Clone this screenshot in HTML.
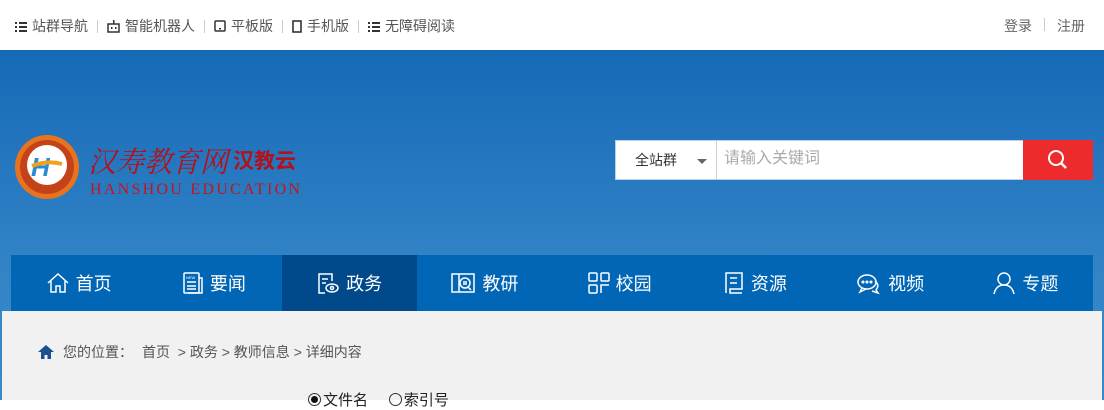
<!DOCTYPE html>
<html><head><meta charset="utf-8"><style>
*{margin:0;padding:0;box-sizing:border-box}
body{width:1104px;height:400px;overflow:hidden;font-family:"Liberation Sans","Noto Sans CJK SC",sans-serif;background:#fff;position:relative}
.top{height:50px;background:#fff;position:relative;font-size:14px;color:#555}
.top .l{position:absolute;left:15px;top:16px;display:flex;align-items:center;white-space:nowrap}
.top .sep{display:inline-block;width:1px;height:13px;background:#ccc;margin:0 9px}
.top .r{position:absolute;right:19px;top:16px;font-size:14px;color:#666}
.ic{display:inline-block;margin-right:5px;vertical-align:middle}
.banner{position:absolute;top:50px;left:0;width:1104px;height:350px;background:linear-gradient(#1569b6,#3283c6 60%,#3a89c9)}
.logo{position:absolute;left:14px;top:134px}
.search{position:absolute;left:615px;top:140px;width:478px;height:40px;background:#fff;border:1px solid #b9d0e6}
.search .sel{position:absolute;left:0;top:0;width:101px;height:38px;border-right:1px solid #c8d6e4;font-size:14px;color:#333;line-height:38px;padding-left:19px}
.search .sel:after{content:"";position:absolute;left:81px;top:18px;border:5px solid transparent;border-top:5px solid #666}
.search .ph{position:absolute;left:108px;top:3px;font-size:16px;color:#aaa}
.search .btn{position:absolute;right:-1px;top:-1px;width:70px;height:40px;background:#ee2b2c}
.nav{position:absolute;left:11px;top:255px;width:1082px;height:56px;background:#0066b5;display:flex}
.nav div{width:135.25px;display:flex;align-items:center;justify-content:center;color:#fff;font-size:18px}
.nav div.a{background:#004a8b}
.nav svg{margin-right:6px}
.content{position:absolute;left:2px;top:311px;width:1100px;height:89px;background:#f1f1f1}
.crumb{position:absolute;left:36px;top:31px;font-size:14px;color:#555;display:flex;align-items:center}
.radio{position:absolute;left:306px;top:78px;font-size:15px;color:#222}
.radio i{display:inline-block;width:13px;height:13px;border:1px solid #333;border-radius:50%;vertical-align:-1px;margin-right:2px;position:relative}
</style></head><body>
<div class="top">
<div class="l">
<svg class="ic" width="12" height="11"><g fill="#333"><rect x="0" y="1" width="2" height="2"/><rect x="4" y="1" width="8" height="2"/><rect x="0" y="5" width="2" height="2"/><rect x="4" y="5" width="8" height="2"/><rect x="0" y="9" width="2" height="2"/><rect x="4" y="9" width="8" height="2"/></g></svg>站群导航<span class="sep"></span>
<svg class="ic" width="13" height="13"><rect x="1" y="4" width="11" height="8" fill="none" stroke="#333" stroke-width="1.5"/><rect x="6" y="0" width="1.5" height="4" fill="#333"/><rect x="4" y="7" width="1.5" height="2" fill="#333"/><rect x="8" y="7" width="1.5" height="2" fill="#333"/></svg>智能机器人<span class="sep"></span>
<svg class="ic" width="12" height="12"><rect x="1" y="1" width="10" height="10" fill="none" stroke="#333" stroke-width="1.5" rx="1"/><rect x="5" y="8" width="2" height="1.5" fill="#333"/></svg>平板版<span class="sep"></span>
<svg class="ic" width="10" height="13"><rect x="1" y="1" width="8" height="11" fill="none" stroke="#333" stroke-width="1.6"/></svg>手机版<span class="sep"></span>
<svg class="ic" width="12" height="11"><g fill="#333"><rect x="0" y="1" width="2" height="2"/><rect x="4" y="1" width="8" height="2"/><rect x="0" y="5" width="2" height="2"/><rect x="4" y="5" width="8" height="2"/><rect x="0" y="9" width="2" height="2"/><rect x="4" y="9" width="8" height="2"/></g></svg>无障碍阅读
</div>
<div class="r">登录<span class="sep" style="margin:0 12px"></span>注册</div>
</div>
<div class="banner"></div>
<div class="logo">
<svg width="290" height="66">
<circle cx="33" cy="33" r="32" fill="#e8731e"/><circle cx="33" cy="33" r="27" fill="#c4421a"/><circle cx="33" cy="31" r="20" fill="#fff"/>
<text x="17" y="42" font-size="26" font-weight="bold" font-style="italic" fill="#2b8ad6" font-family="Liberation Sans">H</text>
<path d="M18 32 Q33 26 48 30" stroke="#f2a21a" stroke-width="4" fill="none"/>
<text x="74" y="38" font-size="29" fill="#b3111b" font-style="italic" font-family="Noto Serif CJK SC,serif" textLength="140" lengthAdjust="spacingAndGlyphs">汉寿教育网</text>
<text x="219" y="34" font-size="21" fill="#b3111b" font-weight="bold" font-family="Noto Sans CJK SC,sans-serif">汉教云</text>
<text x="76" y="60" font-size="16" fill="#c4141c" font-family="Liberation Serif,serif" textLength="210" lengthAdjust="spacing">HANSHOU  EDUCATION</text>
</svg>
</div>
<div class="search"><div class="sel">全站群</div><div class="ph">请输入关键词</div>
<div class="btn"><svg width="70" height="40"><circle cx="33" cy="18" r="7" fill="none" stroke="#fff" stroke-width="2"/><path d="M38 23 L43 28" stroke="#fff" stroke-width="2.5"/></svg></div></div>
<div class="nav">
<div><svg width="24" height="24" fill="none" stroke="#fff" stroke-width="1.5"><path d="M2 12 L12 3 L22 12 M5 10 V21 H10 V15 H14 V21 H19 V10"/></svg>首页</div>
<div><svg width="22" height="24" fill="none" stroke="#fff" stroke-width="1.5"><rect x="2" y="2" width="15" height="20" rx="1"/><path d="M17 7 H20 V22 H6 M5 11 H14 M5 15 H14 M5 18 H14"/><text x="4" y="8" font-size="4" fill="#fff" stroke="none">NEW</text></svg>要闻</div>
<div class="a"><svg width="24" height="24" fill="none" stroke="#fff" stroke-width="1.5"><path d="M16 10 V3 H3 V22 H9 M6 8 H12 M6 12 H10"/><ellipse cx="16" cy="17" rx="6" ry="4"/><circle cx="16" cy="17" r="1.5"/></svg>政务</div>
<div><svg width="26" height="24" fill="none" stroke="#fff" stroke-width="1.5"><path d="M2 3 H24 V21 H2 Z M9 3 V21"/><circle cx="15" cy="12" r="5"/><path d="M13 11 H17 M13 13 H17 M18 16 L21 19"/></svg>教研</div>
<div><svg width="22" height="22" fill="none" stroke="#fff" stroke-width="1.5"><rect x="1" y="1" width="8" height="8" rx="1"/><rect x="13" y="1" width="8" height="8" rx="1"/><rect x="1" y="13" width="8" height="8" rx="1"/><path d="M13 21 V13 H21"/></svg>校园</div>
<div><svg width="22" height="24" fill="none" stroke="#fff" stroke-width="1.5"><path d="M3 22 V2 H19 V18 H7 V22 H19 M7 7 H14 M7 12 H14"/></svg>资源</div>
<div><svg width="26" height="24" fill="none" stroke="#fff" stroke-width="1.5"><ellipse cx="11" cy="11" rx="9" ry="7"/><path d="M6 17 L4 21 L10 18 M19 10 Q24 14 20 19 L22 22 L16 20"/><circle cx="7" cy="11" r=".8" fill="#fff"/><circle cx="11" cy="11" r=".8" fill="#fff"/><circle cx="15" cy="11" r=".8" fill="#fff"/></svg>视频</div>
<div><svg width="24" height="24" fill="none" stroke="#fff" stroke-width="1.5"><circle cx="12" cy="8" r="6"/><path d="M2 23 Q4 14 12 14 Q20 14 22 23"/></svg>专题</div>
</div>
<div class="content">
<div class="crumb"><svg width="16" height="14" style="margin-right:9px"><path d="M8 0 L16 7 H13 V14 H9.5 V10 H6.5 V14 H3 V7 H0 Z" fill="#1b4f8f"/></svg>您的位置：<span style="margin-left:9px">首页 &nbsp;&gt; 政务 &gt; 教师信息 &gt; 详细内容</span></div>
<div class="radio"><i><b style="position:absolute;left:2px;top:2px;width:7px;height:7px;border-radius:50%;background:#111"></b></i>文件名 &nbsp; &nbsp; <i></i>索引号</div>
</div>
</body></html>
